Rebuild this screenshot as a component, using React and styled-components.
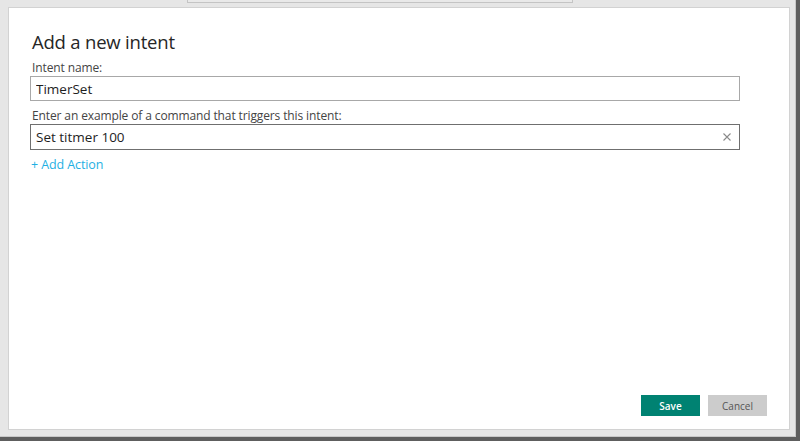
import React, { useState } from "react";
import styled, { createGlobalStyle } from "styled-components";

const GlobalStyles = createGlobalStyle`
  * { box-sizing: border-box; }
  html, body { margin: 0; padding: 0; }
  body {
    font-family: "Open Sans", "Noto Sans", "Liberation Sans", sans-serif;
    background: #e6e6e6;
  }
`;

const App = () => {
  const [name, setName] = useState("TimerSet");
  const [example, setExample] = useState("Set titmer 100");

  return (
    <>
      <GlobalStyles />
      <Window>
        <Viewport>
          <TabStrip>
            <BackTab />
          </TabStrip>
          <Dialog>
            <Body>
              <Title>Add a new intent</Title>
              <Label>Intent name:</Label>
              <Field>
                <TextInput
                  value={name}
                  onChange={(e) => setName(e.target.value)}
                />
              </Field>
              <Label $gap>Enter an example of a command that triggers this intent:</Label>
              <Field $focused>
                <TextInput
                  value={example}
                  onChange={(e) => setExample(e.target.value)}
                />
                <ClearButton onClick={() => setExample("")}>
                  <svg width="8" height="8" viewBox="0 0 8 8">
                    <path d="M0.5 0.5 L7.5 7.5 M7.5 0.5 L0.5 7.5" stroke="#8a8a8a" strokeWidth="1.1" />
                  </svg>
                </ClearButton>
              </Field>
              <AddLink href="#">+ Add Action</AddLink>
            </Body>
            <Footer>
              <Button $primary>Save</Button>
              <Button>Cancel</Button>
            </Footer>
          </Dialog>
        </Viewport>
      </Window>
    </>
  );
};

const Window = styled.div`
  width: 800px;
  height: 441px;
  overflow: hidden;
  border-right: 4px solid #5e5e5e;
  border-bottom: 4px solid #5e5e5e;
  box-shadow: inset -1px -1px 0 #9a9a9a;
`;

const Viewport = styled.div`
  height: 100%;
  background: #e6e6e6;
  display: flex;
  flex-direction: column;
  border-right: 1px solid #c8c8c8;
  border-bottom: 1px solid #c8c8c8;
`;

const TabStrip = styled.div`
  height: 7px;
  display: flex;
`;

const BackTab = styled.div`
  margin-left: 187px;
  width: 386px;
  height: 3px;
  background: #e9e9e9;
  border: 1px solid #c4c4c4;
  border-top: none;
`;

const Dialog = styled.div`
  margin-left: 8px;
  width: 782px;
  height: 423px;
  background: #fff;
  border: 1px solid #d2d2d2;
  display: flex;
  flex-direction: column;
`;

const Body = styled.div`
  flex: 1;
  display: flex;
  flex-direction: column;
  padding: 19px 49px 0 21px;
`;

const Title = styled.h1`
  margin: 0 0 0 2px;
  font-size: 18.5px;
  line-height: 29px;
  font-weight: 400;
  letter-spacing: -0.2px;
  color: #262626;
`;

const Label = styled.div`
  margin: ${(p) => (p.$gap ? "6px" : "3px")} 0 0 2px;
  font-size: 12px;
  line-height: 17px;
  letter-spacing: -0.12px;
  color: #444;
`;

const Field = styled.div`
  position: relative;
  width: 710px;
  height: ${(p) => (p.$focused ? "26px" : "25px")};
  border: 1px solid ${(p) => (p.$focused ? "#6f6f6f" : "#a8a8a8")};
  background: #fff;
  display: flex;
  align-items: center;
`;

const TextInput = styled.input`
  flex: 1;
  height: 100%;
  border: none;
  outline: none;
  padding: 0 0 0 5px;
  font-family: inherit;
  font-size: 13.5px;
  color: #1e1e1e;
  background: transparent;
`;

const ClearButton = styled.button`
  width: 24px;
  height: 100%;
  border: none;
  background: transparent;
  padding: 0;
  display: flex;
  align-items: center;
  justify-content: center;
  cursor: pointer;
`;

const AddLink = styled.a`
  margin: 5px 0 0 1px;
  font-size: 12.5px;
  line-height: 20px;
  letter-spacing: -0.1px;
  color: #1fb0e3;
  text-decoration: none;
  align-self: flex-start;
`;

const Footer = styled.div`
  display: flex;
  justify-content: flex-end;
  gap: 8px;
  padding: 0 22px 13px 0;
`;

const Button = styled.button`
  width: 59px;
  height: 21px;
  border: none;
  padding: 0;
  font-family: inherit;
  font-size: 10px;
  font-weight: ${(p) => (p.$primary ? 600 : 400)};
  color: ${(p) => (p.$primary ? "#fff" : "#555")};
  background: ${(p) => (p.$primary ? "#008272" : "#cccccc")};
  cursor: pointer;
`;

export default App;
